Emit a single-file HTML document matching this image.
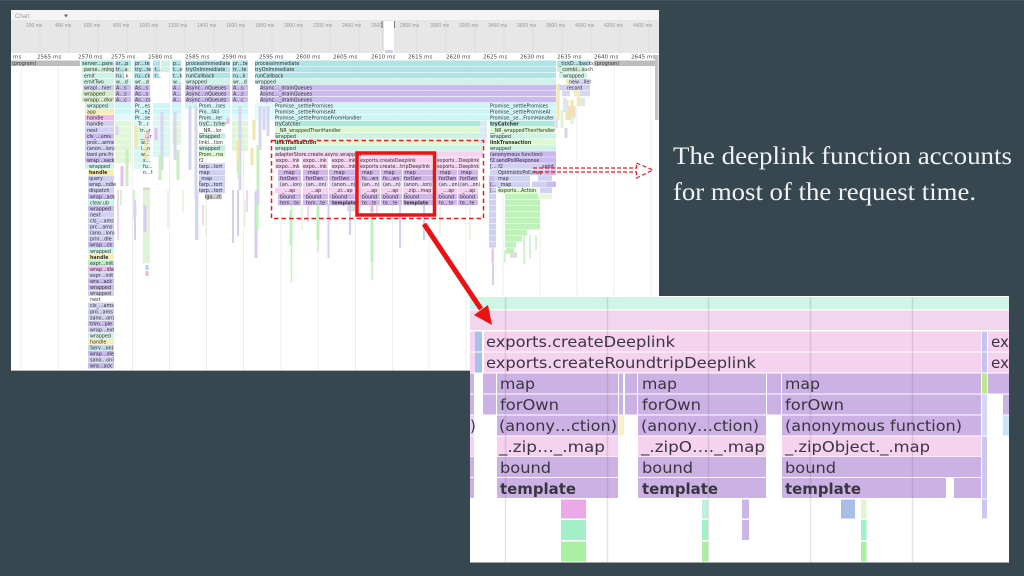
<!DOCTYPE html>
<html><head><meta charset="utf-8"><title>Deeplink flame chart</title>
<style>
html,body{margin:0;padding:0;background:#37474f}
svg{display:block}
.f path{fill:none;stroke-width:5.5}
.f text{font:4.8px "DejaVu Sans",sans-serif;fill:#333}
.f .b{font-weight:bold}
.o text{font:5px "Liberation Sans",sans-serif;fill:#999}
.u text{font:5.6px "DejaVu Sans",sans-serif;fill:#444}
.i text{font:15px "DejaVu Sans",sans-serif;fill:#3a3640}
.i .b{font-weight:bold}
.s text{font:25px "Liberation Serif",serif;fill:#f1f3f3}
</style></head><body>
<svg width="1024" height="576" viewBox="0 0 1024 576" xmlns="http://www.w3.org/2000/svg">
<rect width="1024" height="576" fill="#37474f"/>
<rect width="1024" height="1" fill="#46555c"/>
<rect x="11" y="10" width="648" height="360.5" fill="#fff"/>
<rect x="11" y="370" width="648" height="1" fill="#b5bcc0"/>

<g class="o">
<rect x="11" y="10" width="648" height="10" fill="#f4f4f4"/>
<rect x="11" y="20" width="648" height="33" fill="#e7e7e7"/>
<text x="15" y="18" style="font-size:6px">Chart</text>
<path d="M64 14.5h4l-2 3z" fill="#666"/>
<path d="M40 20v33M69 20v33M98 20v33M127 20v33M156 20v33M185 20v33M214 20v33M243 20v33M272 20v33M301 20v33M330 20v33M359 20v33M388 20v33M417 20v33M446 20v33M475 20v33M504 20v33M533 20v33M562 20v33M591 20v33M620 20v33M649 20v33" stroke="#dadada" stroke-width=".7"/>
<text x="26" y="27">200 ms</text><text x="55" y="27">400 ms</text><text x="84" y="27">600 ms</text><text x="113" y="27">800 ms</text><text x="139" y="27">1000 ms</text><text x="168" y="27">1200 ms</text><text x="197" y="27">1400 ms</text><text x="226" y="27">1600 ms</text><text x="255" y="27">1800 ms</text><text x="284" y="27">2000 ms</text><text x="313" y="27">2200 ms</text><text x="342" y="27">2400 ms</text><text x="371" y="27">2600 ms</text><text x="430" y="27">3000 ms</text><text x="400" y="27">2800 ms</text><text x="459" y="27">3200 ms</text><text x="488" y="27">3400 ms</text><text x="517" y="27">3600 ms</text><text x="546" y="27">3800 ms</text><text x="575" y="27">4000 ms</text><text x="604" y="27">4200 ms</text><text x="633" y="27">4400 ms</text>
<rect x="383" y="21" width="11" height="32" fill="#fff"/>
<path d="M382 21v7M394.500 21v7" stroke="#777" stroke-width="1"/>
<path d="M383 21v30" stroke="#ccc" stroke-width="1"/>
<rect x="385" y="50" width="8" height="3" fill="#cfcfe8"/>
</g>

<g class="u">
<text x="13" y="58.500">ms</text><text x="37" y="58.500">2565 ms</text><text x="78" y="58.500">2570 ms</text><text x="111" y="58.500">2575 ms</text><text x="148" y="58.500">2580 ms</text><text x="185" y="58.500">2585 ms</text><text x="222" y="58.500">2590 ms</text><text x="259" y="58.500">2595 ms</text><text x="296" y="58.500">2600 ms</text><text x="333" y="58.500">2605 ms</text><text x="371" y="58.500">2610 ms</text><text x="408" y="58.500">2615 ms</text><text x="446" y="58.500">2620 ms</text><text x="483" y="58.500">2625 ms</text><text x="520" y="58.500">2630 ms</text><text x="557" y="58.500">2635 ms</text><text x="594" y="58.500">2640 ms</text><text x="631" y="58.500">2645 ms</text>
</g>
<path d="M21 60v310M58.500 60v310M95.500 60v310M132.500 60v310M169.500 60v310M206.500 60v310M243.500 60v310M281 60v310M318 60v310M355.500 60v310M392.500 60v310M429 60v310M466 60v310M503 60v310M540 60v310M577 60v310M614 60v310M651 60v310" stroke="#efefef" stroke-width="1"/>

<g class="f" style="filter:blur(.35px)">
<path stroke="#bdbdbd" d="M11 63.300H80M594 63.300H655"/>
<path stroke="#aee3e8" d="M255 63.300H556M255 69.300H556M255 75.400H556M185 63.300H230M185 69.300H230M185 75.400H230M115 63.300H131M115 69.300H124M115 75.400H124M134 63.300H150M134 69.300H150M134 75.400H150M153 63.300H160M153 69.300H160M153 75.400H159M172 63.300H181M172 69.300H181M172 75.400H181M232 63.300H248M232 69.300H248M232 75.400H248M557 63.300H590"/>
<path stroke="#a8eee0" d="M81 63.300H114"/>
<path stroke="#c9f0d4" d="M82 69.300H114M124 69.300H131M557 69.300H585"/>
<path stroke="#cdf3e6" d="M82 75.400H114M82 81.500H114M255 81.500H556M185 81.500H230M115 81.500H131M134 81.500H150M172 81.500H181M232 81.500H248M85 105.700H114M85 117.800H114M275 135.900H482M275 148H482M490 135.900H556M490 148H556M88 202.500H114M88 208.500H114M88 250.900H114M88 335.600H114M559 75.400H587M115 87.500H131M161 63.300H170M161 69.300H170"/>
<path stroke="#cabaf0" d="M260 87.500H556M260 93.500H556M260 99.600H556M185 87.500H230M185 93.500H230M185 99.600H230M115 87.500H131M115 93.500H131M115 99.600H131M134 87.500H150M134 93.500H150M134 99.600H150M172 87.500H181M172 93.500H181M172 99.600H181M232 87.500H248M232 93.500H248M232 99.600H248M85 136H114M85 160H114M88 184H114M88 196.400H114M88 208.500H114M88 244.800H114M88 281.100H114M88 287.200H114M88 323.500H114M88 347.700H114M88 353.700H114M88 365.800H114M490 154H556M490 160H556"/>
<path stroke="#d0d0f1" d="M83 87.500H114M85 123.800H114M85 129.900H114M85 142H114M85 148H114M85 154H114M88 178.200H114M88 190.300H114M88 214.600H114M88 220.600H114M88 226.700H114M88 232.700H114M88 238.800H114M88 275H114M88 293.200H114M88 305.300H114M88 311.400H114M88 317.400H114M88 329.500H114M88 341.600H114M88 359.800H114M490 166H556M490 172.200H556M490 178.200H530M490 184.300H530M199 166H225M199 172.200H225M199 178.200H225M199 184.300H225M199 190.300H225M557 87.500H590"/>
<path stroke="#d2ecc2" d="M82 93.500H114M82 99.600H114"/>
<path stroke="#ccf7f7" d="M275 105.700H556M275 111.700H556M275 117.800H556M185 105.700H197M199 105.700H230M199 111.700H230M199 117.800H230M134 105.700H150M134 111.700H150M134 117.800H150M115 105.700H131M115 111.700H131M172 105.700H181M172 111.700H181M153 105.700H170M153 111.700H170M232 105.700H248M232 111.700H248"/>
<path stroke="#e1fbfb" d="M255 105.700H275M255 111.700H275M255 117.800H275M115 117.800H131M172 117.800H181M232 117.800H248"/>
<path stroke="#aee8d8" d="M275 123.800H480M490 123.800H556"/>
<path stroke="#dcf9cf" d="M275 129.900H480M490 129.900H556M275 142H482M490 142H556M199 154H225"/>
<path stroke="#c6ece0" d="M199 123.800H225M199 136H225M199 148H225"/>
<path stroke="#d6e9f6" d="M480 123.800H487M480 129.900H487M480 135.900H487M480 142H486"/>
<path stroke="#dff7d7" d="M115 123.800H131M115 129.900H131M115 135.900H131M115 142H131M115 148H131M115 154H131M115 160H131M232 123.800H248M232 129.900H248M232 135.900H248M232 142H248M232 148H248M172 123.800H181M172 129.900H181M172 135.900H181M172 142H181"/>
<path stroke="#d9f7ef" d="M134 123.800H150M134 129.900H150M134 136H150M134 142H150M134 148H150M134 154H150M134 160H150M134 166H150M153 117.800H170M153 123.800H170M153 129.900H170M153 136H170M153 142H170M153 148H170M153 154H170"/>
<path style="stroke-width:3" stroke="#d6d6f2" d="M117 126V135M162 112V170M175 112V160M190 106V170M196 106V200M240 106V190M260 106V150M268 106V136M264 106V130"/>
<path style="stroke-width:3" stroke="#f2e6a8" d="M136 126V148M254 120V140M146 130V160M252 148V165M238 140V172"/>
<path style="stroke-width:3" stroke="#c9efc0" d="M127 150V186M178 150V180M239 160V178M258 145V190M160 155V180"/>
<path style="stroke-width:3" stroke="#e6bfee" d="M156 128V140M148 130V142M228 118V124M122 166V186"/>
<path stroke="#f5d3ef" d="M275 154H483M275 160H299M302 160H328M331 160H355M358 160H432M435 160H480M275 166H299M302 166H328M331 166H355M358 166H432M435 166H480M275 190.300H301M303 190.300H328M329 190.300H356M360 190.300H380M381 190.300H402M403 190.300H433M437 190.300H457M458 190.300H478"/>
<path stroke="#cfb8e8" d="M278 172.200H301M303 172.200H328M329 172.200H356M360 172.200H380M381 172.200H402M403 172.200H433M437 172.200H457M458 172.200H478M278 178.200H301M303 178.200H328M329 178.200H356M360 178.200H380M381 178.200H402M403 178.200H433M437 178.200H457M458 178.200H478M278 196.400H301M303 196.400H328M329 196.400H356M360 196.400H380M381 196.400H402M403 196.400H433M437 196.400H457M458 196.400H478M278 202.500H301M303 202.500H328M329 202.500H356M360 202.500H380M381 202.500H402M403 202.500H433M437 202.500H457M458 202.500H478"/>
<path stroke="#ead9f2" d="M278 184.300H301M303 184.300H328M329 184.300H356M360 184.300H380M381 184.300H402M403 184.300H433M437 184.300H457M458 184.300H478"/>
<path stroke="#f6eeb5" d="M85 111.700H114M88 172.200H114M88 256.900H114M88 341.600H114"/>
<path stroke="#efb8ef" d="M85 117.800H114M88 269H114"/>
<path stroke="#b5eec8" d="M88 263H114"/>
<path stroke="#bfdcef" d="M88 347.700H114"/>
<path stroke="#cdf3e6" d="M85 166H114"/>
<path stroke="#d0d0f1" d="M88 184.300H114"/>
<path stroke="#ccc" d="M205 196.400H222"/>
<path stroke="#ded9b8" d="M143 190.300H150"/>
<path stroke="#dcdcdc" d="M347 208.500H355"/>
<path stroke="#dcdcdc" d="M510 255H517"/>
<path stroke="#d0d0f1" d="M489 178.200H496M489 184.300H496M489 190.300H496M489 196.400H496M489 202.500H496M489 208.500H496M489 214.600H496M489 220.600H496M489 226.700H496M489 232.700H496M489 238.800H496M489 244.800H496M538 178H552M540 190.300H552M532 184.300H548"/>
<path stroke="#cabaf0" d="M489 178.200H494M489 184.300H494M547 184.300H556M545 166H556M545 172.200H556"/>
<path stroke="#bff2bb" d="M505 196.400H540M505 202.500H540M505 208.500H540M505 214.600H540M505 220.600H540M505 226.700H540M505 232.700H527M505 238.800H522M505 244.800H516M506 250.900H514"/>
<path stroke="#e6f7dd" d="M497 190.300H503M538 196.400H552"/>
<path stroke="#dcf9cf" d="M498 190.300H538"/>
<path style="stroke-width:1.500" stroke="#c4f2c2" d="M291.500 204V282M372 204V280M505 250V262M524 235V264M530 235V258M536 235V250M318 204V252M256 190V258M121 190V205M134 190V220"/>
<path style="stroke-width:2" stroke="#d8cef2" d="M328.500 204V258M135 200V240M196 190V240M233 190V243M238 190V236M424 204V240M350 204V235M400 204V248M256 200V215M493 245V285"/>
<path style="stroke-width:1.500" stroke="#e3f4da" d="M168 190V228M183 190V212M206 205V235M245 200V226M302 204V230M440 204V235M470 204V240"/>
<path style="stroke-width:1.500" stroke="#f0c8f0" d="M118 190V240M203 205V225M247 190V212M308 204V222M377 204V216M492 250V262"/>
<path style="stroke-width:7" stroke="#dff3d5" d="M146.500 190V263"/>
<path style="stroke-width:3" stroke="#dacbf2" d="M145 205V232M256 192V258"/>
<path style="stroke-width:3" stroke="#b5d6ee" d="M147 265V270"/>
<path style="stroke-width:3" stroke="#efb4d8" d="M147 271V276M372 204V212"/>
<path style="stroke-width:3" stroke="#bff2bb" d="M257 200V230M318 206V240M372 212V262M291 210V245"/>
<path style="stroke-width:3" stroke="#d6d6f2" d="M258 190V205M135 205V216M197 190V240"/>
<path style="stroke-width:3" stroke="#f2e6a8" d="M558 84V120M567 100V120M572 100V118M579 97V106"/>
<path style="stroke-width:4" stroke="#dde5f6" d="M565 98V112M583 98V106M556 118V128"/>
<path style="stroke-width:3" stroke="#f3dcc0" d="M570 106V120M574 106V118"/>
<path style="stroke-width:3" stroke="#d6d6f2" d="M566 128V138"/>
<path style="stroke-width:3" stroke="#dff3d5" d="M562 110V128M572 116V124"/>
<path stroke="#f2eebb" d="M566 81.500H570M574 93.500H580"/>
<path stroke="#d8d8f3" d="M570 81.500H590M562 93.500H570M580 93.500H590"/>

<text x="12" y="65.200">(program)</text><text x="595" y="65.200">(program)</text>
<text x="82" y="65.200">server…pare</text><text x="84" y="71.200">parse…ming</text><text x="84" y="77.300">emit</text><text x="84" y="83.400">emitTwo</text><text x="84" y="89.400">wrapl…hier</text><text x="84" y="95.400">wrapped</text><text x="84" y="101.500">wrapp…dlor</text><text x="87" y="107.600">wrapped</text><text x="87" y="113.600">app</text><text x="87" y="119.700">handle</text><text x="87" y="125.700">handle</text><text x="87" y="131.800">next</text><text x="87" y="137.800">cls_…ums</text><text x="87" y="143.900">proc…arms</text><text x="87" y="149.900">(anon…ion)</text><text x="87" y="155.900">bani.pre.fn</text><text x="87" y="161.900">wrap…sack</text><text x="89" y="167.900">wrapped</text><text x="89" y="174.100" class="b">handle</text><text x="89" y="180.100">query</text><text x="89" y="186.200">wrap…ndle</text><text x="89" y="192.200">dispatch</text><text x="90" y="198.300">wrap…ack</text><text x="90" y="204.400">clear.ub</text><text x="90" y="210.400">wrapped</text><text x="90" y="216.500">next</text><text x="90" y="222.500">cls_…ams</text><text x="90" y="228.600">prc…ams</text><text x="90" y="234.600">(ano…ion)</text><text x="90" y="240.700">prin…dle</text><text x="90" y="246.700">wrap…ck</text><text x="90" y="252.800">wrapped</text><text x="90" y="258.800" class="b">handle</text><text x="90" y="264.900">expr…init</text><text x="90" y="270.900">wrap…dle</text><text x="90" y="276.900">expr…init</text><text x="90" y="283">wra…ack</text><text x="90" y="289.100">wrapped</text><text x="90" y="295.100">wrapped</text><text x="90" y="301.200">next</text><text x="90" y="307.200">cls_…ams</text><text x="90" y="313.300">pro…ams</text><text x="90" y="319.300">sano…on)</text><text x="90" y="325.400">trim…ple</text><text x="90" y="331.400">wrap…ext</text><text x="90" y="337.500">wrapped</text><text x="90" y="343.500">handle</text><text x="90" y="349.600">Serv…on)</text><text x="90" y="355.600">wrap…dle</text><text x="90" y="361.700">sano…on)</text><text x="90" y="367.700">wra…ack</text>

<text x="116" y="65.200">sr…p</text><text x="116" y="71.200">tr…a</text><text x="116" y="77.300">ru…k</text><text x="116" y="83.400">w…d</text><text x="116" y="89.400">A…s</text><text x="116" y="95.400">A…s</text><text x="116" y="101.500">A…c</text>
<text x="135" y="65.200">pr…te</text><text x="135" y="71.200">try…te</text><text x="135" y="77.300">ru…ck</text><text x="135" y="83.400">wr…d</text><text x="135" y="89.400">As…s</text><text x="135" y="95.400">As…s</text><text x="135" y="101.500">As…cs</text><text x="135" y="107.600">Pr…es</text><text x="135" y="113.600">Pr…e2</text><text x="135" y="119.700">Pr…se</text><text x="138" y="125.700">Tr…r</text><text x="140" y="131.800">tr…r</text><text x="140" y="137.800">__…r</text><text x="141" y="143.900">w…</text><text x="141" y="149.900">l…n</text><text x="141" y="155.900">w…</text><text x="143" y="161.900">s…</text><text x="143" y="167.900">fu…</text><text x="143" y="173.900">n…t</text>
<text x="155" y="71.200">t…</text><text x="155" y="77.300">r…</text>
<text x="173" y="65.200">p…</text><text x="173" y="71.200">t…e</text><text x="173" y="77.300">t…k</text><text x="173" y="83.400">w…</text><text x="173" y="89.400">A…</text><text x="173" y="95.400">A…</text><text x="173" y="101.500">A…</text>
<text x="186" y="65.200">processImmediate</text><text x="186" y="71.200">tryOnImmediate</text><text x="186" y="77.300">runCallback</text><text x="186" y="83.400">wrapped</text><text x="186" y="89.400">Async…nQueues</text><text x="186" y="95.400">Async…nQueues</text><text x="186" y="101.500">Async…nQueues</text>
<text x="199" y="107.600">Prom…ises</text><text x="199" y="113.600">Pro…fAll</text><text x="199" y="119.700">Prom…ler</text><text x="199" y="125.700">tryC…tcher</text><text x="199" y="131.800">__NR…lor</text><text x="199" y="137.800">wrapped</text><text x="199" y="143.900">linkl…tion</text><text x="199" y="149.900">wrapped</text><text x="199" y="155.900">Prom…ros</text><text x="199" y="161.900">f2</text><text x="199" y="167.900">tarp…tort</text><text x="199" y="174.100">map</text><text x="199" y="180.100">_map</text><text x="199" y="186.200">tarp…tort</text><text x="199" y="192.200">tarp…tort</text><text x="205" y="198.300">lga…rt</text>
<text x="233" y="65.200">pr…te</text><text x="233" y="71.200">tr…te</text><text x="233" y="77.300">ru…k</text><text x="233" y="83.400">wr…d</text><text x="233" y="89.400">A…s</text><text x="233" y="95.400">A…s</text><text x="233" y="101.500">A…c</text>
<text x="255" y="65.200">processImmediate</text><text x="255" y="71.200">tryOnImmediate</text><text x="255" y="77.300">runCallback</text><text x="255" y="83.400">wrapped</text><text x="260" y="89.400">Async…_drainQueues</text><text x="260" y="95.400">Async…_drainQueues</text><text x="260" y="101.500">Async…_drainQueues</text>
<text x="275" y="107.600">Promise._settlePromises</text><text x="275" y="113.600">Promise._settlePromiseAt</text><text x="275" y="119.700">Promise._settlePromiseFromHandler</text><text x="275" y="125.700">tryCatcher</text><text x="275" y="131.800">__NR_wrappedThenHandler</text><text x="275" y="137.800">wrapped</text><text x="275" y="143.900" class="b">linkTransaction</text><text x="275" y="149.900">wrapped</text><text x="275" y="155.900">adapterStore.create.async.wrapped</text>
<text x="276" y="161.900">expo…ink</text><text x="303" y="161.900">expo…ink</text><text x="332" y="161.900">expo…ink</text><text x="360" y="161.900">exports.createDeeplink</text><text x="437" y="161.900" textLength="42" lengthAdjust="spacingAndGlyphs">exports…Deeplink</text>
<text x="276" y="167.900">expo…ink</text><text x="303" y="167.900">expo…ink</text><text x="332" y="167.900">expo…ink</text><text x="360" y="167.900" textLength="70" lengthAdjust="spacingAndGlyphs">exports.create…tripDeeplink</text><text x="437" y="167.900" textLength="42" lengthAdjust="spacingAndGlyphs">exports…Deeplink</text>
<text x="284" y="174.100">map</text><text x="308" y="174.100">map</text><text x="334" y="174.100">map</text><text x="362" y="174.100">map</text><text x="384" y="174.100">map</text><text x="405" y="174.100">map</text><text x="440" y="174.100">map</text><text x="461" y="174.100">map</text>
<text x="280" y="180.100">forOwn</text><text x="306" y="180.100">forOwn</text><text x="332" y="180.100">forOwn</text><text x="362" y="180.100">fo…wn</text><text x="383" y="180.100">fo…wn</text><text x="404" y="180.100">forOwn</text><text x="439" y="180.100">forOwn</text><text x="460" y="180.100">forOwn</text>
<text x="280" y="186.200">(an…ion)</text><text x="306" y="186.200">(an…on)</text><text x="332" y="186.200">(anon…n)</text><text x="362" y="186.200">(an…n)</text><text x="383" y="186.200">(an…n)</text><text x="404" y="186.200">(anon…ion)</text><text x="439" y="186.200">(an…on)</text><text x="460" y="186.200">(an…on)</text>
<text x="282" y="192.200">_…ap</text><text x="308" y="192.200">_…ap</text><text x="334" y="192.200">_.zi…ap</text><text x="364" y="192.200">_…ap</text><text x="385" y="192.200">_…ap</text><text x="405" y="192.200">_.zip…map</text><text x="441" y="192.200">_…ap</text><text x="462" y="192.200">_…ap</text>
<text x="280" y="198.300">bound</text><text x="306" y="198.300">bound</text><text x="332" y="198.300">bound</text><text x="362" y="198.300">bound</text><text x="383" y="198.300">bound</text><text x="404" y="198.300">bound</text><text x="439" y="198.300">bound</text><text x="460" y="198.300">bound</text>
<text x="280" y="204.400">tem…te</text><text x="306" y="204.400">tem…te</text><text x="332" y="204.400" class="b">template</text><text x="362" y="204.400">te…te</text><text x="383" y="204.400">te…te</text><text x="404" y="204.400" class="b">template</text><text x="439" y="204.400">te…te</text><text x="460" y="204.400">te…te</text>
<text x="490" y="107.600">Promise._settlePromises</text><text x="490" y="113.600">Promise._settlePromiseAt</text><text x="490" y="119.700">Promise._se…FromHandler</text><text x="490" y="125.700" class="b">tryCatcher</text><text x="490" y="131.800" textLength="65" lengthAdjust="spacingAndGlyphs">__NR_wrappedThenHandler</text><text x="490" y="137.800">wrapped</text><text x="490" y="143.900" class="b">linkTransaction</text><text x="490" y="149.900">wrapped</text><text x="490" y="155.900">(anonymous function)</text><text x="490" y="161.900">f2  sendPollResponse</text><text x="490" y="167.900">[…  f2</text><text x="542" y="167.900">send</text><text x="498" y="173.900">OptimisticPoll.map</text><text x="498" y="180.100">map</text><text x="490" y="186.200">[…  _map</text><text x="490" y="192.200">[…  exports…Action</text>
<text x="559" y="65.200">_tickD…lbacks</text><text x="560" y="71.200">_combi…such</text><text x="563" y="77.300">wrapped</text><text x="569" y="83.400">new…ller</text><text x="567" y="89.400">record</text>
</g>

<rect x="655" y="55" width="3.500" height="65" fill="#c4c4c4"/>

<rect x="271.500" y="140.500" width="212" height="78" fill="none" stroke="#f01a24" stroke-width="1.500" stroke-dasharray="4.500 3"/>
<rect x="357" y="153" width="77.500" height="62" fill="none" stroke="#ee1111" stroke-width="3.500"/>
<path d="M533 168H636M533 172H636" stroke="#f01a24" stroke-width="1.200" stroke-dasharray="4 2" fill="none"/>
<path d="M636.500 163L653 170L636.500 178Z" stroke="#f01a24" stroke-width="1.200" stroke-dasharray="4 2.500" fill="none"/>

<g class="i">
<rect x="470" y="296" width="539" height="266.500" fill="#fff"/>
<rect x="470" y="297" width="539" height="12" fill="#cef5e6"/>
<rect x="470" y="310.500" width="539" height="19.500" fill="#f2d6ee"/>
<rect x="470" y="331.500" width="539" height="20" fill="#f5d2ee"/>
<rect x="470" y="352.500" width="539" height="20" fill="#f5d2ee"/>
<g fill="#a5c1ee"><rect x="475" y="331.500" width="7" height="20"/><rect x="475" y="352.500" width="7" height="20"/></g>
<g fill="#fff"><rect x="482" y="331.500" width="2" height="41"/><rect x="981" y="331.500" width="1" height="41"/><rect x="987" y="331.500" width="1" height="41"/></g>
<g fill="#c5c4ec"><rect x="982" y="331.500" width="5" height="20"/><rect x="982" y="352.500" width="5" height="20"/></g>
<g fill="#ccb1e4">
<rect x="470" y="373.500" width="4" height="20"/><rect x="483" y="373.500" width="13" height="20"/><rect x="497" y="373.500" width="121" height="20"/><rect x="619" y="373.500" width="4" height="20"/><rect x="625" y="373.500" width="12" height="20"/><rect x="638" y="373.500" width="128" height="20"/><rect x="767" y="373.500" width="14" height="20"/><rect x="782" y="373.500" width="199" height="20"/><rect x="988" y="373.500" width="21" height="20"/>
<rect x="470" y="394.500" width="4" height="20"/><rect x="483" y="394.500" width="13" height="20"/><rect x="497" y="394.500" width="121" height="20"/><rect x="619" y="394.500" width="4" height="20"/><rect x="625" y="394.500" width="12" height="20"/><rect x="638" y="394.500" width="128" height="20"/><rect x="767" y="394.500" width="14" height="20"/><rect x="782" y="394.500" width="199" height="20"/><rect x="1003" y="394.500" width="6" height="20"/>
<rect x="497" y="415.500" width="121" height="20"/><rect x="638" y="415.500" width="128" height="20"/><rect x="782" y="415.500" width="199" height="20"/>
<rect x="470" y="457" width="4" height="20"/><rect x="497" y="457" width="121" height="20"/><rect x="638" y="457" width="128" height="20"/><rect x="782" y="457" width="199" height="20"/>
<rect x="470" y="478" width="4" height="20"/><rect x="497" y="478" width="121" height="20"/><rect x="638" y="478" width="128" height="20"/><rect x="782" y="478" width="164" height="20"/><rect x="954" y="478" width="27" height="20"/>
</g>
<rect x="982" y="373.500" width="5" height="20" fill="#b8e98c"/>
<rect x="982" y="394.500" width="5" height="41" fill="#d3d8f5"/>
<rect x="1003" y="415.500" width="6" height="20" fill="#c8e6f5"/>
<rect x="619" y="415.500" width="5" height="20" fill="#faf0c0"/>
<rect x="470" y="415.500" width="4" height="20" fill="#e5d7ef"/>
<g fill="#f5d2ee"><rect x="470" y="436.500" width="4" height="20"/><rect x="497" y="436.500" width="121" height="20"/><rect x="638" y="436.500" width="128" height="20"/><rect x="782" y="436.500" width="199" height="20"/></g>
<g fill="#cbc7ee"><rect x="982" y="436.500" width="5" height="62"/><rect x="982" y="499.500" width="5" height="19"/></g>
<rect x="561" y="499.500" width="25" height="19" fill="#eba9e8"/>
<rect x="561" y="520" width="25" height="20" fill="#a3f0c8"/>
<rect x="561" y="541.500" width="25" height="20" fill="#a9f0a3"/>
<rect x="702" y="499.500" width="6" height="19" fill="#bfeee2"/>
<rect x="702" y="520" width="6" height="20" fill="#a3f0c8"/>
<rect x="702" y="541.500" width="6" height="20" fill="#a9f0a3"/>
<g fill="#cbb6e8"><rect x="742" y="499.500" width="7" height="19"/><rect x="742" y="520" width="7" height="20"/></g>
<rect x="841" y="499.500" width="14" height="19" fill="#a8bde8"/>
<rect x="861" y="499.500" width="5.500" height="19" fill="#e2f4d3"/>
<rect x="861" y="520" width="5.500" height="20" fill="#a3f0c8"/>
<rect x="861" y="541.500" width="5.500" height="20" fill="#a9f0a3"/>

<text x="486" y="347" textLength="189" lengthAdjust="spacingAndGlyphs">exports.createDeeplink</text>
<text x="486" y="368" textLength="270" lengthAdjust="spacingAndGlyphs">exports.createRoundtripDeeplink</text>
<text x="991" y="347" textLength="18" lengthAdjust="spacingAndGlyphs">ex</text>
<text x="991" y="368" textLength="18" lengthAdjust="spacingAndGlyphs">ex</text>
<text x="500" y="389" textLength="35" lengthAdjust="spacingAndGlyphs">map</text>
<text x="642" y="389" textLength="35" lengthAdjust="spacingAndGlyphs">map</text>
<text x="785" y="389" textLength="35" lengthAdjust="spacingAndGlyphs">map</text>
<text x="500" y="410" textLength="59" lengthAdjust="spacingAndGlyphs">forOwn</text>
<text x="642" y="410" textLength="59" lengthAdjust="spacingAndGlyphs">forOwn</text>
<text x="785" y="410" textLength="59" lengthAdjust="spacingAndGlyphs">forOwn</text>
<text x="499" y="431" textLength="118" lengthAdjust="spacingAndGlyphs">(anony…ction)</text>
<text x="641" y="431" textLength="118" lengthAdjust="spacingAndGlyphs">(anony…ction)</text>
<text x="785" y="431" textLength="177" lengthAdjust="spacingAndGlyphs">(anonymous function)</text>
<text x="470" y="431">)</text>
<text x="499" y="452" textLength="106" lengthAdjust="spacingAndGlyphs">_.zip…_.map</text>
<text x="641" y="452" textLength="124" lengthAdjust="spacingAndGlyphs">_.zipO…._.map</text>
<text x="785" y="452" textLength="145" lengthAdjust="spacingAndGlyphs">_.zipObject._.map</text>
<text x="500" y="473" textLength="51" lengthAdjust="spacingAndGlyphs">bound</text>
<text x="642" y="473" textLength="51" lengthAdjust="spacingAndGlyphs">bound</text>
<text x="785" y="473" textLength="51" lengthAdjust="spacingAndGlyphs">bound</text>
<text x="500" y="494" class="b" textLength="76" lengthAdjust="spacingAndGlyphs">template</text>
<text x="642" y="494" class="b" textLength="76" lengthAdjust="spacingAndGlyphs">template</text>
<text x="785" y="494" class="b" textLength="76" lengthAdjust="spacingAndGlyphs">template</text>
<path d="M505.500 297V562M607.500 297V562M708.500 297V562M810.500 297V562M912.500 297V562" stroke="#5a5a5a" stroke-opacity=".16" stroke-width="1.500"/>
</g>

<path d="M424 224L481 309" stroke="#ee1111" stroke-width="5" fill="none"/>
<path d="M492 325L474 315L488 305Z" fill="#ee1111"/>

<g class="s">
<text x="673" y="164" textLength="339" lengthAdjust="spacingAndGlyphs">The deeplink function accounts</text>
<text x="673" y="200" textLength="303" lengthAdjust="spacingAndGlyphs">for most of the request time.</text>
</g>
</svg>
</body></html>
